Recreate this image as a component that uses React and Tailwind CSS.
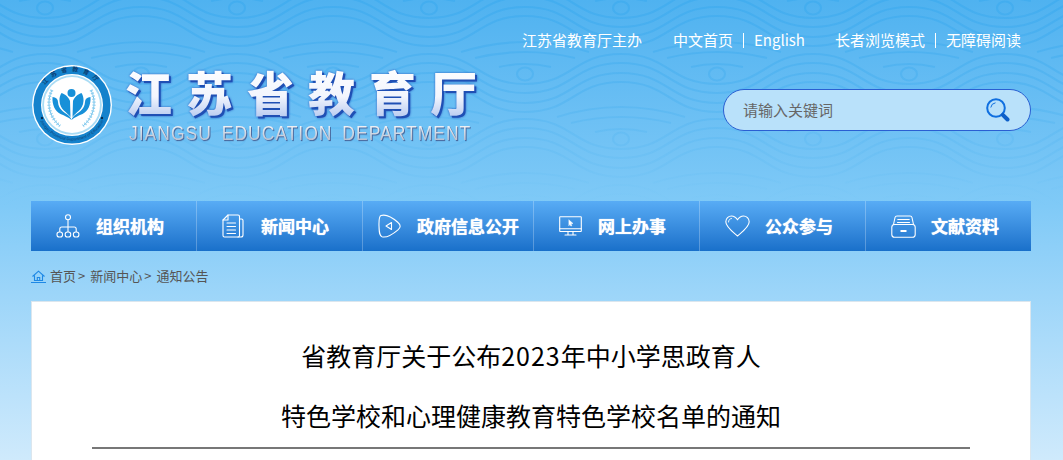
import React from "react";

const CJK = "font-['Noto_Sans_CJK_SC','Liberation_Sans',sans-serif]";

function Waves() {
  const P = 192;
  const rows = [
    { cy: 8, x: 45 },
    { cy: 74, x: 141 },
    { cy: 139, x: 45 },
    { cy: 205, x: 141 },
  ];
  const lines = [];
  rows.forEach((r, ri) => {
    [10, 19, 29, 38].forEach((d, di) => {
      const valley = r.cy + d;
      const peak = valley - 30;
      let start = r.x - P * 2;
      let dp = `M${start} ${valley}`;
      for (let x = start; x < 1200; x += P) {
        dp += ` C${x + 48} ${valley} ${x + 48} ${peak} ${x + 96} ${peak} S${x + 144} ${valley} ${x + 192} ${valley}`;
      }
      lines.push(<path key={`w${ri}-${di}`} d={dp} />);
    });
    for (let k = -1; k < 8; k++) {
      const cx = r.x + k * P;
      const cy = r.cy;
      lines.push(<ellipse key={`o${ri}-${k}`} cx={cx} cy={cy} rx="8" ry="6.5" />);
      lines.push(
        <path
          key={`a${ri}-${k}`}
          d={`M${cx - 26} ${cy - 7} Q${cx} ${cy - 13} ${cx + 26} ${cy - 7} M${cx - 50} ${cy - 16} Q${cx} ${cy - 28} ${cx + 50} ${cy - 16} M${cx - 64} ${cy - 22} Q${cx} ${cy - 42} ${cx + 64} ${cy - 22}`}
        />
      );
    }
  });
  return (
    <svg className="absolute top-0 left-0" width="1063" height="215" fill="none" aria-hidden="true">
      <defs>
        <linearGradient id="wv" gradientUnits="userSpaceOnUse" x1="0" y1="0" x2="0" y2="212">
          <stop offset="0" stopColor="#36a8ee" stopOpacity="0.5" />
          <stop offset="0.45" stopColor="#3fabee" stopOpacity="0.34" />
          <stop offset="0.8" stopColor="#5ab8f1" stopOpacity="0.2" />
          <stop offset="1" stopColor="#7ac8f6" stopOpacity="0" />
        </linearGradient>
      </defs>
      <g stroke="url(#wv)" strokeWidth="2.2">{lines}</g>
    </svg>
  );
}

function Emblem() {
  const petals = (
    <>
      <path d="M29.500 28 C33 29 37 32.500 38 36 L38.500 52 C35 47 28 45 27.500 36 C27.300 33 28 30 29.500 28Z" />
      <path d="M20.500 32 C24 32.500 26 34 26 37 C26.500 44 31 46.500 36 50 C38 52 39 53 39.500 55 C36 52 33 51 28.500 49 C23 46 20 40 20.500 32Z" />
    </>
  );
  const laurel = (
    <>
      <path d="M20 25 C14 37 17 52 28 61" stroke="#62b9e8" strokeWidth="0.900" fill="none" />
      <path d="M20 25 C14 37 17 52 28 61" stroke="#8fd0f0" strokeWidth="3.200" strokeDasharray="1.200 1.800" fill="none" />
    </>
  );
  return (
    <svg width="80" height="80" viewBox="0 0 80 80" className="shrink-0">
      <defs>
        <path id="topArc" d="M6.500 40 A33.500 33.500 0 0 1 73.500 40" />
        <path id="botArc" d="M4.500 40 A35.500 35.500 0 0 0 75.500 40" />
      </defs>
      <circle cx="40" cy="40" r="40" fill="#fff" />
      <circle cx="40" cy="40" r="38.600" fill="#1482cc" />
      <circle cx="40" cy="40" r="31" fill="#fff" />
      <circle cx="40" cy="40" r="29.800" fill="#a9dcf5" />
      <circle cx="40" cy="40" r="28" fill="#fff" />
      <text fontSize="6" fontWeight="700" fill="#0c3f73" fontFamily="'Noto Sans CJK SC',sans-serif">
        <textPath href="#topArc" startOffset="50%" textAnchor="middle" letterSpacing="4.500">江苏省教育厅</textPath>
      </text>
      <text fontSize="4" fill="#0c3f73" fontFamily="'Liberation Sans',sans-serif">
        <textPath href="#botArc" startOffset="50%" textAnchor="middle">Jiangsu Provincial Department of Education</textPath>
      </text>
      <circle cx="10" cy="53" r="1.200" fill="#062d50" />
      <circle cx="70" cy="53" r="1.200" fill="#062d50" />
      {laurel}
      <g transform="translate(79 0) scale(-1 1)">{laurel}</g>
      <g fill="#1790d8">
        <circle cx="39.500" cy="28" r="4" />
        {petals}
        <g transform="translate(79 0) scale(-1 1)">{petals}</g>
      </g>
    </svg>
  );
}

const iconProps = {
  fill: "none",
  stroke: "#fff",
  strokeWidth: 1.1,
  strokeLinecap: "round",
  strokeLinejoin: "round",
  "aria-hidden": true,
};

function OrgIcon() {
  return (
    <svg width="24" height="24" viewBox="0 0 24 24" {...iconProps}>
      <circle cx="12" cy="3.200" r="2.500" />
      <path d="M12 5.800 V13 M3.800 17.500 V15 Q3.800 13 5.800 13 H18.200 Q20.200 13 20.200 15 V17.500 M12 13 V17.500" />
      <rect x="1" y="18" width="5.500" height="5" rx="2.300" />
      <rect x="9.200" y="18" width="5.500" height="5" rx="2.300" />
      <rect x="17.400" y="18" width="5.500" height="5" rx="2.300" />
    </svg>
  );
}
function DocIcon() {
  return (
    <svg width="22" height="24" viewBox="0 0 22 24" {...iconProps}>
      <path d="M6 1 H16 Q17.500 1 17.500 2.500 V21.500 Q17.500 23 16 23 H2.500 Q1 23 1 21.500 V6 Z" />
      <path d="M6 1 V6 H1" />
      <path d="M17.500 5 H19.500 Q21 5 21 6.500 V21 Q21 23 19 23 H16" />
      <path d="M5 9 H13.500 M5 12.500 H13.500 M5 16 H13.500 M5 19.500 H13.500" />
    </svg>
  );
}
function PlayIcon() {
  return (
    <svg width="23" height="24" viewBox="0 0 23 24" {...iconProps}>
      <path d="M3 1.500 C8 0 15 4 20 8.500 C23 11 22.800 13.500 20 15.800 C15 20 8.500 24 4 22.800 C1.500 22 1.200 19 1 12 C0.800 6 1 2.200 3 1.500 Z" />
      <path d="M13.500 8.500 V15.500 L8 12 Z" />
    </svg>
  );
}
function MonitorIcon() {
  return (
    <svg width="23" height="20" viewBox="0 0 23 20" {...iconProps}>
      <rect x="0.700" y="0.700" width="21.600" height="14.800" rx="0.500" />
      <path d="M0.700 12.800 H22.300 M9 15.500 V18.800 M14 15.500 V18.800 M6 19 H17" />
      <path d="M10 4 L14 7.500 L12 7.800 L12.800 9.800 L11.800 10 L11 8.300 L10 9.500 Z" fill="#fff" strokeWidth="0.500" />
    </svg>
  );
}
function HeartIcon() {
  return (
    <svg width="25" height="22" viewBox="0 0 25 22" {...iconProps}>
      <path d="M12.500 21 C8 17 0.800 12 0.800 6.800 C0.800 3.300 3.500 1 6.500 1 C9 1 11 2.500 12.500 4.800 C14 2.500 16 1 18.500 1 C21.500 1 24.200 3.300 24.200 6.800 C24.200 12 17 17 12.500 21 Z" />
      <path d="M3.500 7 C3.500 5 4.800 3.700 6.500 3.500" strokeWidth="0.900" />
    </svg>
  );
}
function TrayIcon() {
  return (
    <svg width="25" height="23" viewBox="0 0 25 23" {...iconProps}>
      <path d="M2.500 9.500 L4 2.500 Q4.300 1 6 1 H19 Q20.700 1 21 2.500 L22.500 9.500" />
      <path d="M6.800 4.500 H18.200 M6.500 7.500 H18.500" />
      <rect x="0.800" y="9.500" width="23.400" height="12.800" rx="2.800" />
      <path d="M9.500 16 H15.500" strokeWidth="2" strokeLinecap="butt" />
    </svg>
  );
}

const navItems = [
  { w: "w-[166px]", pad: "pl-[25px]", slot: "w-[40px]", icon: <OrgIcon />, label: "组织机构" },
  { w: "w-[166px]", pad: "pl-[25px]", slot: "w-[39px]", icon: <DocIcon />, label: "新闻中心" },
  { w: "w-[171px]", pad: "pl-[15px]", slot: "w-[39px]", icon: <PlayIcon />, label: "政府信息公开" },
  { w: "w-[166px]", pad: "pl-[25px]", slot: "w-[39px]", icon: <MonitorIcon />, label: "网上办事" },
  { w: "w-[166px]", pad: "pl-[25px]", slot: "w-[40px]", icon: <HeartIcon />, label: "公众参与" },
  { w: "w-[165px]", pad: "pl-[25px]", slot: "w-[40px]", icon: <TrayIcon />, label: "文献资料" },
];

export default function App() {
  return (
    <div className={`relative h-screen overflow-hidden bg-linear-to-b from-[#4fb2f0] via-[#80caf7] via-45% to-[#cfeafc] ${CJK}`}>
      <Waves />
      <div className="relative pl-[31px] pr-[32px]">
        <div className="flex items-center justify-end pt-[29px] pr-[10px] text-[15px] leading-[22px] text-white">
          <span>江苏省教育厅主办</span>
          <span className="ml-[31px]">中文首页</span>
          <span className="mx-[10px] h-[15px] w-px bg-white" />
          <span>English</span>
          <span className="ml-[30px]">长者浏览模式</span>
          <span className="mx-[10px] h-[15px] w-px bg-white" />
          <span>无障碍阅读</span>
        </div>

        <div className="flex items-start justify-between pt-[14px] h-[150px]">
          <div className="flex items-start pl-px">
            <Emblem />
            <div className="ml-[13px] -mt-[2px]">
              <div className="text-[47px] leading-[56px] font-black tracking-[14px] whitespace-nowrap bg-linear-to-b from-white via-[#f2f5fd] via-60% to-[#b5c8ef] bg-clip-text text-transparent [filter:drop-shadow(2px_2px_0_#1f4fb4)_drop-shadow(0_0_1px_#2a5cc0)]">
                江苏省教育厅
              </div>
              <div className="mt-[4px] pl-[4px] font-['Liberation_Sans',sans-serif] text-[17.5px] leading-[20px] tracking-[1px] [word-spacing:4px] whitespace-nowrap scale-y-[1.12] bg-linear-to-b from-white to-[#aab4c8] bg-clip-text text-transparent [filter:drop-shadow(1px_1px_0.5px_#4a6a9e)]">
                JIANGSU EDUCATION DEPARTMENT
              </div>
            </div>
          </div>
          <div className="mt-[24px] flex h-[42px] w-[308px] items-center justify-between rounded-full border border-[#2a5fd2] bg-[#b9e1fa] pl-[19px] pr-[20px]">
            <span className="text-[15px] text-[#666]">请输入关键词</span>
            <svg width="24" height="24" viewBox="0 0 24 24" fill="none" aria-hidden="true">
              <circle cx="10" cy="10" r="8.800" stroke="#0f6fe0" strokeWidth="2" />
              <path d="M4.800 9.500 A5.500 5.500 0 0 1 9.500 4.800" stroke="#0f6fe0" strokeWidth="1" />
              <path d="M16.800 16.800 L21.500 21.500" stroke="#0d5fc8" strokeWidth="4" strokeLinecap="round" />
            </svg>
          </div>
        </div>

        <nav className="flex h-[50px] bg-linear-to-b from-[#58acf5] to-[#1970ca] text-white">
          {navItems.map((it, i) => (
            <div
              key={it.label}
              className={`flex items-center ${it.w} ${it.pad} ${i < 5 ? "border-r border-white/25" : ""}`}
            >
              <span className={`flex ${it.slot} shrink-0`}>{it.icon}</span>
              <span className="text-[17px] font-bold whitespace-nowrap [text-shadow:0_0_1px_#fff]">{it.label}</span>
            </div>
          ))}
        </nav>

        <div className="flex h-[50px] items-center text-[13px] text-[#555]">
          <svg width="15" height="13" viewBox="0 0 15 13" fill="none" stroke="#1e88e5" strokeWidth="1.100" aria-hidden="true" className="mr-[4px]">
            <path d="M1.500 6.500 L7.500 1.200 L13.500 6.500 M3.500 5.500 V10.500 H11.500 V5.500 M6.300 10.500 V7.500 H8.700 V10.500 M0 12.500 H15" />
          </svg>
          <span>首页</span>
          <span className="ml-[2px]">&gt;</span>
          <span className="ml-[5px]">新闻中心</span>
          <span className="ml-[2px]">&gt;</span>
          <span className="ml-[5px]">通知公告</span>
        </div>

        <main className="h-[200px] border border-[#dbe6ee] bg-white pt-[23px]">
          <h1 className="text-center text-[25px] leading-[60px] font-normal text-black">
            省教育厅关于公布<span className="tracking-[1px]">2023</span>年中小学思政育人
            <br />
            特色学校和心理健康教育特色学校名单的通知
          </h1>
          <div className="mx-[60px] mt-[2px] h-[2px] bg-[#777]" />
        </main>
      </div>
    </div>
  );
}
